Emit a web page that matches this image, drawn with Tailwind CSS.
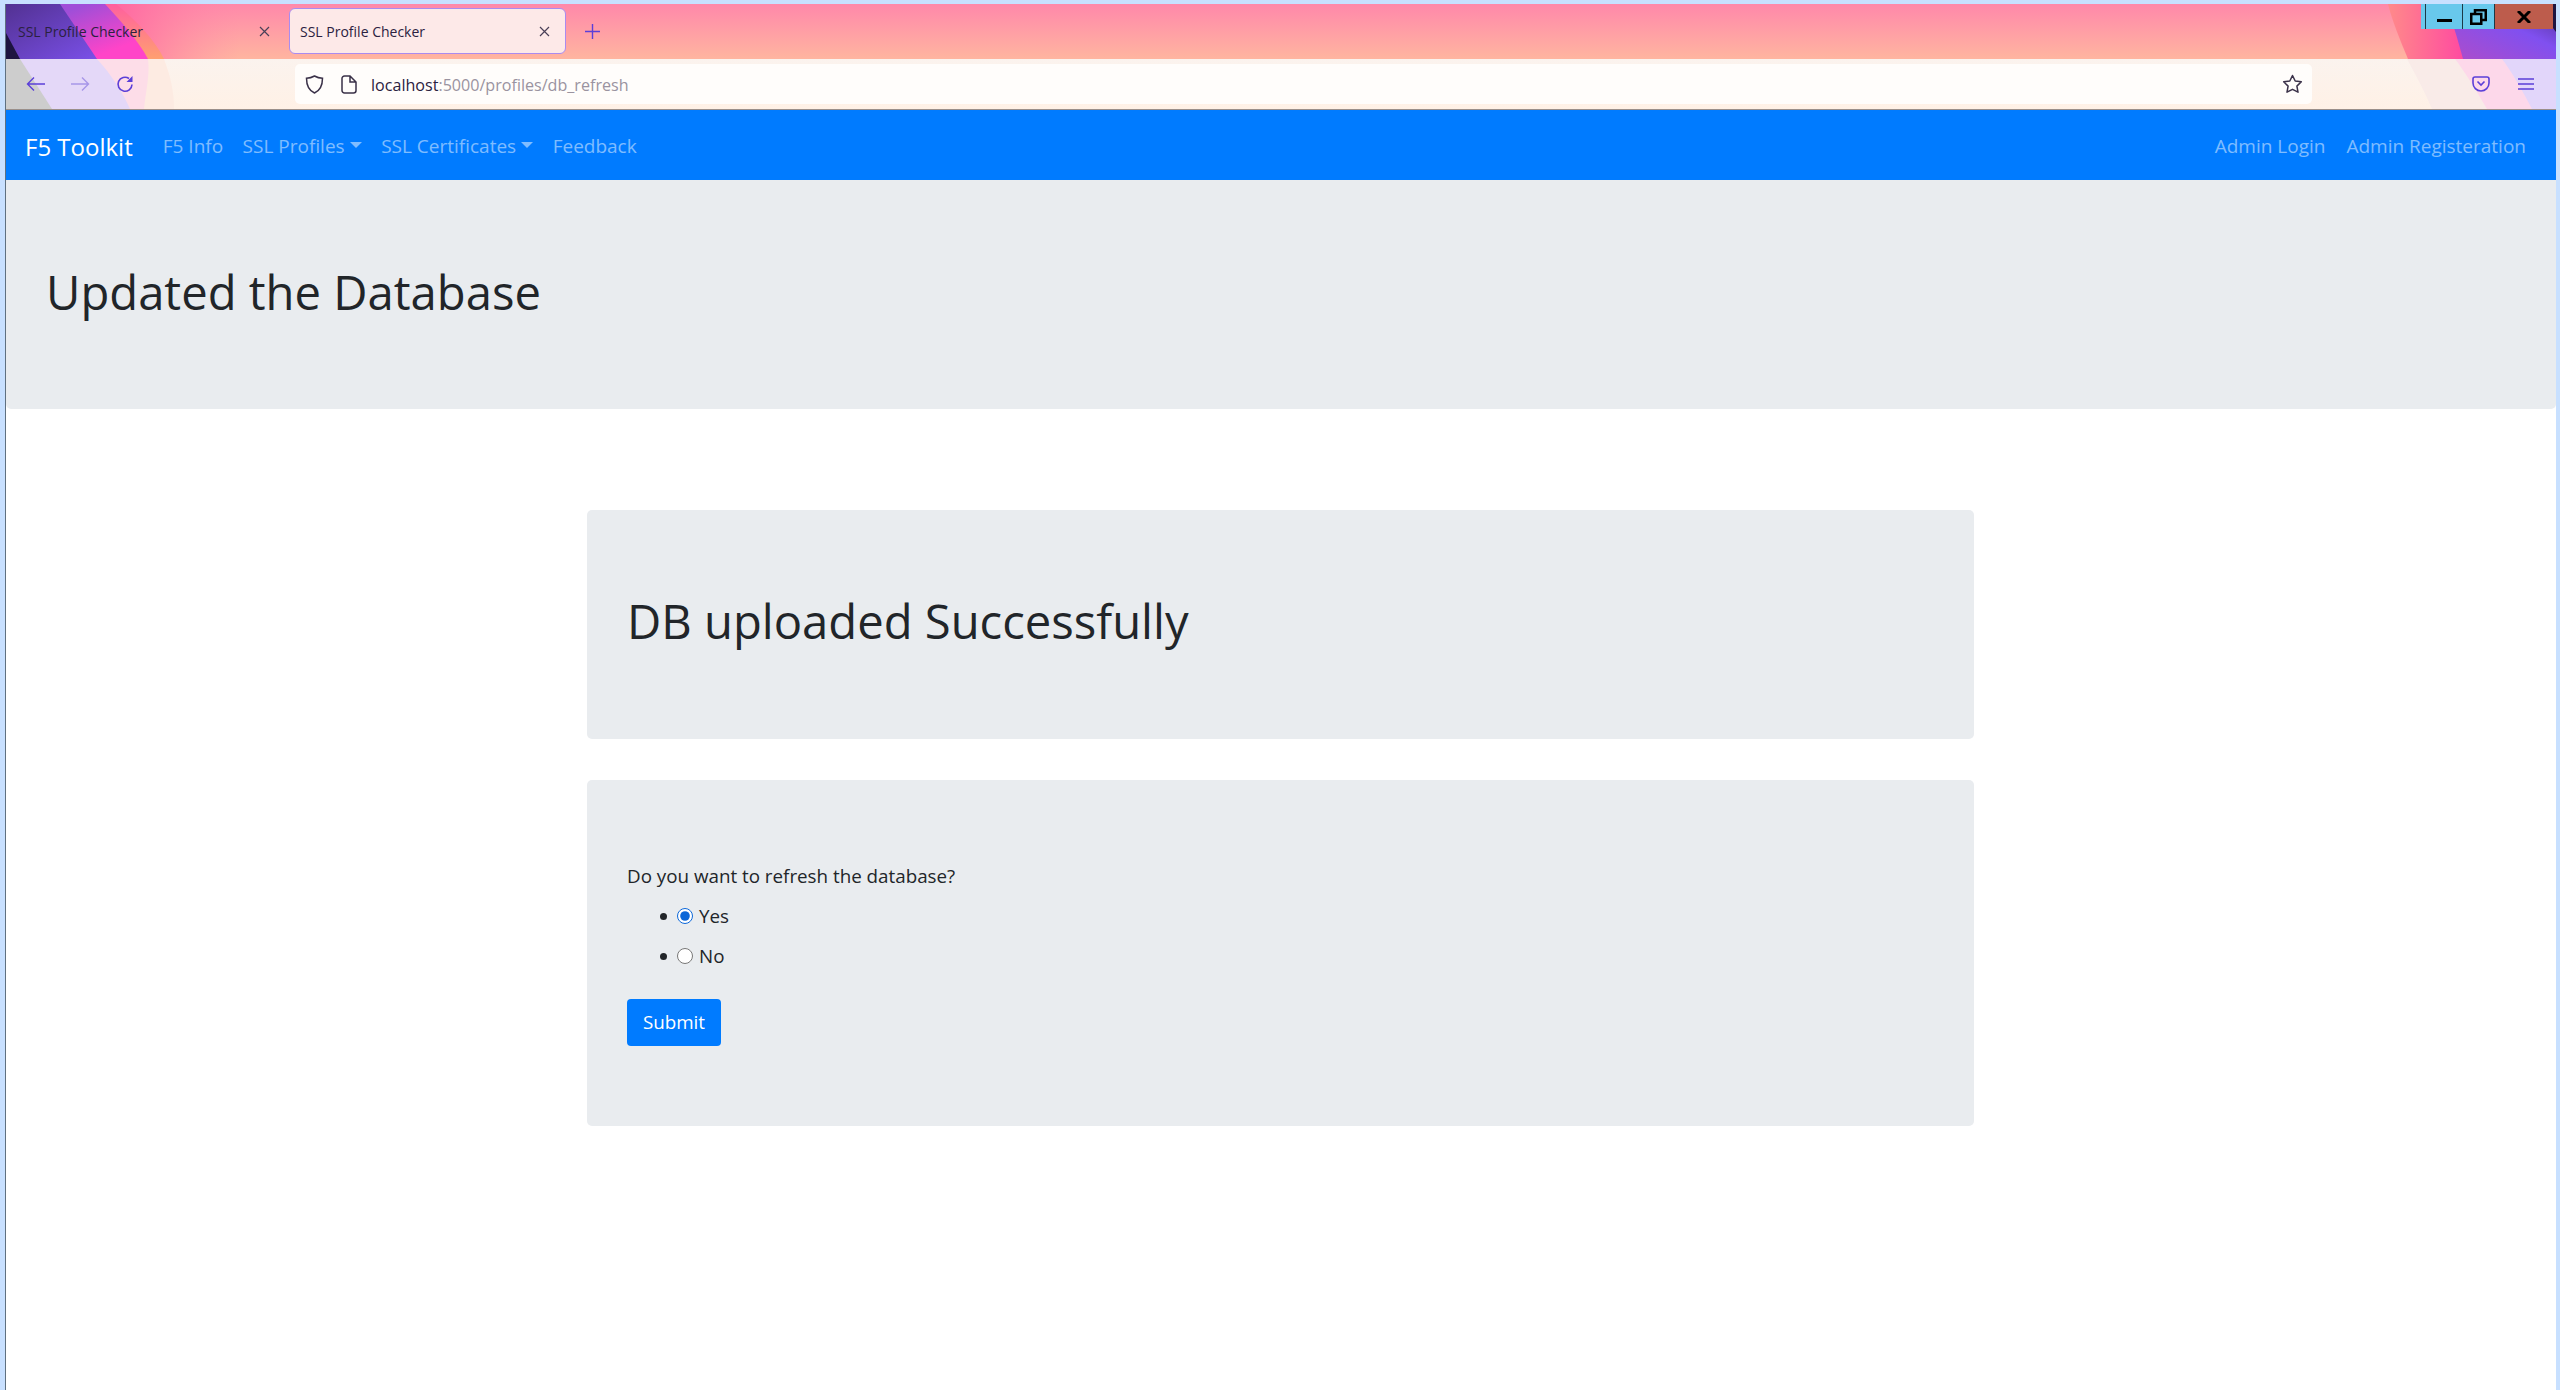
<!DOCTYPE html>
<html lang="en">
<head>
  <meta charset="UTF-8" />
  <title>SSL Profile Checker</title>
  <script src="https://cdn.jsdelivr.net/npm/@tailwindcss/browser@4"></script>
</head>
<body class="h-[1390px] overflow-hidden bg-[#c8e0ff] pt-[4px] pl-[5px] pr-[4px] font-['Open_Sans','Noto_Sans',sans-serif] text-[#212529]">
<div class="h-[1386px] border-l border-[#5f7080]">

  <!-- browser chrome -->
  <div class="relative h-[106px] overflow-hidden border-b border-[#9a8f8a] bg-[linear-gradient(#ff88aa_0,#ffb5a0_55px,#fbf3ee_55px,#fff1e6_105px)]">
    <!-- theme swooshes, coordinates are page pixels -->
    <svg class="absolute left-0 top-0" width="240" height="105" viewBox="6 4 240 105">
      <defs>
        <linearGradient id="lp" x1="0" y1="0" x2="1" y2="0"><stop offset="0" stop-color="#ff5f9f"/><stop offset="1" stop-color="#ff88aa" stop-opacity="0"/></linearGradient>
        <linearGradient id="lo" x1="0" y1="0" x2="0" y2="1"><stop offset="0" stop-color="#ff5f9f"/><stop offset="1" stop-color="#ffa070"/></linearGradient>
        <linearGradient id="lm" x1="0" y1="0" x2="1" y2="1"><stop offset="0.300" stop-color="#a04ed8"/><stop offset="0.800" stop-color="#ff44c8"/></linearGradient>
        <linearGradient id="lv" x1="0" y1="0" x2="1" y2="1"><stop offset="0" stop-color="#51308f"/><stop offset="1" stop-color="#7a50e8"/></linearGradient>
      </defs>
      <path d="M100 4H240V59H100Z" fill="url(#lp)"/>
      <path d="M100 4H116C136 20 155 40 164 59H100Z" fill="url(#lo)"/>
      <path d="M0 4H105C120 20 138 40 148 59H0Z" fill="url(#lm)"/>
      <path d="M0 4H60L97 59H0Z" fill="url(#lv)"/>
      <path d="M6 33L20 59H6Z" fill="#1e1440"/>
      <path d="M164 59C170 75 174 90 174 109H0V59Z" fill="#fdebe2"/>
      <path d="M148 59C150 75 146 90 144 109H0V59Z" fill="#fddde8"/>
      <path d="M97 59C112 75 124 95 130 109H0V59Z" fill="#e4d8f8"/>
      <path d="M6 59H20L52 109H6Z" fill="#cdcdcd"/>
    </svg>
    <svg class="absolute right-0 top-0" width="170" height="105" viewBox="2386 4 170 105">
      <defs>
        <linearGradient id="ro" x1="0" y1="0" x2="1" y2="0"><stop offset="0" stop-color="#ff8a8a"/><stop offset="0.450" stop-color="#ff4aa0"/></linearGradient>
        <linearGradient id="rv" x1="0" y1="1" x2="1" y2="0"><stop offset="0" stop-color="#b04cc8"/><stop offset="0.600" stop-color="#8050f0"/><stop offset="1" stop-color="#4f2f90"/></linearGradient>
      </defs>
      <path d="M2388 4H2556V59H2408C2400 40 2392 20 2388 4Z" fill="url(#ro)"/>
      <path d="M2446 4H2556V59H2463C2458 40 2452 20 2446 4Z" fill="url(#rv)"/>
      <path d="M2535 4H2556V32Z" fill="#1e1440"/>
      <path d="M2407 59H2556V109H2432C2424 90 2414 72 2407 59Z" fill="#f9ebe8"/>
      <path d="M2455 59H2556V109H2487C2476 90 2465 72 2455 59Z" fill="#fdd8ea"/>
      <path d="M2502 59H2556V109H2532C2522 90 2512 72 2502 59Z" fill="#e2d6fa"/>
    </svg>

    <!-- tab strip -->
    <div class="relative h-[55px] flex items-center text-[14px] text-[#2b2140]">
      <div class="w-[283px] flex items-center justify-between pl-[12px] pr-[19px]">
        <span>SSL Profile Checker</span>
        <svg width="11" height="11" viewBox="0 0 11 11" stroke="#4a4058" stroke-width="1.2"><path d="M1 1L10 10M10 1L1 10"/></svg>
      </div>
      <div class="w-[277px] h-[46px] mt-[-1px] flex items-center justify-between pl-[10px] pr-[15px] rounded-[6px] border border-[#a98bf0] bg-[#fde9e8]">
        <span>SSL Profile Checker</span>
        <svg width="11" height="11" viewBox="0 0 11 11" stroke="#4a4058" stroke-width="1.2"><path d="M1 1L10 10M10 1L1 10"/></svg>
      </div>
      <svg class="ml-[19px]" width="15" height="15" viewBox="0 0 15 15" stroke="#5b3fd8" stroke-width="1.4"><path d="M7.500 0V15M0 7.500H15"/></svg>
    </div>

    <!-- toolbar -->
    <div class="relative h-[50px] flex items-center">
      <div class="w-[289px] flex items-center pl-[20px]">
        <svg width="19" height="18" viewBox="0 0 19 18" fill="none" stroke="#5b3fd8" stroke-width="1.4"><path d="M19 9H1.500M8 2.500L1.500 9L8 15.500"/></svg>
        <svg class="ml-[26px]" width="19" height="18" viewBox="0 0 19 18" fill="none" stroke="#a796e8" stroke-width="1.4"><path d="M0 9H17.500M11 2.500L17.500 9L11 15.500"/></svg>
        <svg class="ml-[26px]" width="18" height="18" viewBox="0 0 18 18" fill="none" stroke="#5b3fd8" stroke-width="1.6"><path d="M16 9.500A7 7 0 1 1 13 3.500"/><path d="M16.500 1V7H10.500Z" fill="#5b3fd8" stroke="none"/></svg>
      </div>
      <div class="w-[2017px] h-[40px] flex items-center rounded-[5px] bg-[#fffdfb] pl-[10px] pr-[9px]">
        <svg width="19" height="21" viewBox="0 0 19 21" fill="none" stroke="#3a3148" stroke-width="1.5"><path d="M9.500 2C12 3.500 14.500 4.200 17.500 4.200C17.500 11.500 15 16.500 9.500 19C4 16.500 1.500 11.500 1.500 4.200C4.500 4.200 7 3.500 9.500 2Z"/></svg>
        <svg class="ml-[17px]" width="16" height="19" viewBox="0 0 16 19" fill="none" stroke="#3a3148" stroke-width="1.500"><path d="M3.500 1H9L15 7V15.500A2.500 2.500 0 0 1 12.500 18H3.500A2.500 2.500 0 0 1 1 15.500V3.500A2.500 2.500 0 0 1 3.500 1ZM9 1V7H15"/></svg>
        <span class="ml-[14px] pt-[2px] text-[16.100px] text-[#9a93a0]"><span class="text-[#2b2140]">localhost</span>:5000/profiles/db_refresh</span>
        <svg class="ml-auto" width="21" height="20" viewBox="0 0 21 20" fill="none" stroke="#3a3148" stroke-width="1.5" stroke-linejoin="round"><path d="M10.500 1.500L13.200 7L19.300 7.800L14.900 12.100L16 18.200L10.500 15.300L5 18.200L6.100 12.100L1.700 7.800L7.800 7Z"/></svg>
      </div>
      <svg class="ml-[160px]" width="18" height="16" viewBox="0 0 18 16" fill="none" stroke="#5b3fd8" stroke-width="1.6"><path d="M3 1H15A2 2 0 0 1 17 3V7A8 8 0 0 1 1 7V3A2 2 0 0 1 3 1ZM5.500 5.500L9 9L12.500 5.500"/></svg>
      <svg class="ml-[28px]" width="16" height="12" viewBox="0 0 16 12" stroke="#5b3fd8" stroke-width="1.4"><path d="M0 1H16M0 6H16M0 11H16"/></svg>
    </div>

    <!-- window controls -->
    <div class="absolute right-[3px] top-0 h-[25px] w-[132px] flex bg-[#68c8ec]">
      <div class="w-[4px]"></div>
      <div class="w-[37px] border-l border-[#1c3a48] relative">
        <div class="absolute left-[11px] top-[15px] w-[15px] h-[3px] bg-black"></div>
      </div>
      <div class="w-[32px] border-l border-[#1c3a48] flex items-center justify-center">
        <svg width="17" height="16" viewBox="0 0 17 16" fill="none" stroke="black" stroke-width="2.500"><path d="M1.250 5H11.250V14.750H1.250ZM5 4V1.250H15.750V11H12.500"/></svg>
      </div>
      <div class="flex-1 border-l border-[#1c3a48] bg-[#bd5c4c] flex items-center justify-center">
        <svg width="14" height="12" viewBox="0 0 14 12" stroke="black" stroke-width="3"><path d="M1 0L13 12M13 0L1 12"/></svg>
      </div>
    </div>
  </div>

  <!-- page -->
  <div class="h-[1280px] bg-white">
    <nav class="h-[70px] flex items-center bg-[#007bff] pl-[19px] pr-[30px] pt-[3px] text-[19px] text-white/50">
      <a class="text-[24px] text-white mr-[30px]">F5 Toolkit</a>
      <ul class="flex gap-[19.5px]">
        <li>F5 Info</li>
        <li class="flex items-center">SSL Profiles<span class="ml-[5px] mb-[3px] border-x-[6px] border-x-transparent border-t-[6px] border-t-white/50"></span></li>
        <li class="flex items-center">SSL Certificates<span class="ml-[5px] mb-[3px] border-x-[6px] border-x-transparent border-t-[6px] border-t-white/50"></span></li>
        <li>Feedback</li>
      </ul>
      <ul class="ml-auto flex gap-[21px]">
        <li>Admin Login</li>
        <li>Admin Registeration</li>
      </ul>
    </nav>

    <div class="h-[229px] flex items-center bg-[#e9ecef] rounded-b-[5px] pl-[40px] pb-[4px]">
      <h1 class="text-[47.2px] leading-[1.2]">Updated the Database</h1>
    </div>

    <div class="w-[1387px] ml-[581px] mt-[101px]">
      <div class="h-[229px] flex items-center bg-[#e9ecef] rounded-[5px] pl-[40px] pb-[6px]">
        <h2 class="text-[47.2px] leading-[1.2]">DB uploaded Successfully</h2>
      </div>

      <form class="h-[346px] mt-[41px] bg-[#e9ecef] rounded-[5px] pl-[40px] pt-[82px] text-[18.8px]">
        <p class="leading-[28px]">Do you want to refresh the database?</p>
        <ul class="mt-[12px] pl-[33px] leading-[28px]">
          <li class="mb-[12px] flex items-center"><span class="size-[7px] rounded-full bg-[#212529] mr-[10px]"></span><label class="flex items-center gap-[6px]"><input type="radio" name="refresh" checked class="size-[16px] accent-[#0a66d8]" />Yes</label></li>
          <li class="flex items-center"><span class="size-[7px] rounded-full bg-[#212529] mr-[10px]"></span><label class="flex items-center gap-[6px]"><input type="radio" name="refresh" class="size-[16px]" />No</label></li>
        </ul>
        <button type="button" class="mt-[29px] h-[47px] w-[94px] rounded-[4px] bg-[#007bff] text-white">Submit</button>
      </form>
    </div>
  </div>
</div>
</body>
</html>
